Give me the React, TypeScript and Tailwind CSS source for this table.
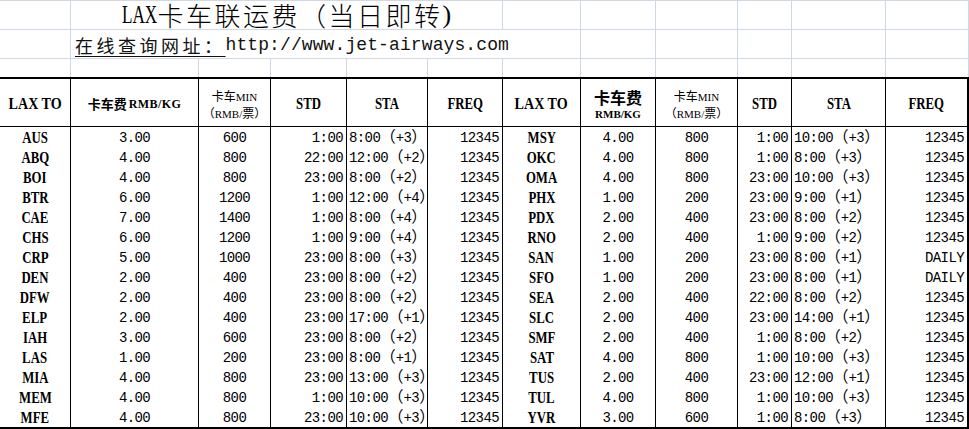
import React from 'react';

type Row = [string, string, string, string, string, string];

const leftRows: Row[] = [
  ['AUS', '3.00', '600', '1:00', '8:00（+3）', '12345'],
  ['ABQ', '4.00', '800', '22:00', '12:00（+2）', '12345'],
  ['BOI', '4.00', '800', '23:00', '8:00（+2）', '12345'],
  ['BTR', '6.00', '1200', '1:00', '12:00（+4）', '12345'],
  ['CAE', '7.00', '1400', '1:00', '8:00（+4）', '12345'],
  ['CHS', '6.00', '1200', '1:00', '9:00（+4）', '12345'],
  ['CRP', '5.00', '1000', '23:00', '8:00（+3）', '12345'],
  ['DEN', '2.00', '400', '23:00', '8:00（+2）', '12345'],
  ['DFW', '2.00', '400', '23:00', '8:00（+2）', '12345'],
  ['ELP', '2.00', '400', '23:00', '17:00（+1）', '12345'],
  ['IAH', '3.00', '600', '23:00', '8:00（+2）', '12345'],
  ['LAS', '1.00', '200', '23:00', '8:00（+1）', '12345'],
  ['MIA', '4.00', '800', '23:00', '13:00（+3）', '12345'],
  ['MEM', '4.00', '800', '1:00', '10:00（+3）', '12345'],
  ['MFE', '4.00', '800', '23:00', '10:00（+3）', '12345'],
];

const rightRows: Row[] = [
  ['MSY', '4.00', '800', '1:00', '10:00（+3）', '12345'],
  ['OKC', '4.00', '800', '1:00', '8:00（+3）', '12345'],
  ['OMA', '4.00', '800', '23:00', '10:00（+3）', '12345'],
  ['PHX', '1.00', '200', '23:00', '9:00（+1）', '12345'],
  ['PDX', '2.00', '400', '23:00', '8:00（+2）', '12345'],
  ['RNO', '2.00', '400', '1:00', '9:00（+2）', '12345'],
  ['SAN', '1.00', '200', '23:00', '8:00（+1）', 'DAILY'],
  ['SFO', '1.00', '200', '23:00', '8:00（+1）', 'DAILY'],
  ['SEA', '2.00', '400', '22:00', '8:00（+2）', '12345'],
  ['SLC', '2.00', '400', '23:00', '14:00（+1）', '12345'],
  ['SMF', '2.00', '400', '1:00', '8:00（+2）', '12345'],
  ['SAT', '4.00', '800', '1:00', '10:00（+3）', '12345'],
  ['TUS', '2.00', '400', '23:00', '12:00（+1）', '12345'],
  ['TUL', '4.00', '800', '1:00', '10:00（+3）', '12345'],
  ['YVR', '3.00', '600', '1:00', '8:00（+3）', '12345'],
];

const cols =
  'grid grid-cols-[71px_128px_72px_76px_81px_75px_78px_75px_82px_54px_94px_83px]';
const mono = "font-['Liberation_Mono','Noto_Sans_CJK_SC',monospace]";
const serif = "font-['Liberation_Serif','Noto_Sans_CJK_SC',serif]";
const cjk = "font-['Noto_Sans_CJK_SC',sans-serif]";

const gridLine = 'border-r border-[#d0d7e5]';

const BoldLatin = ({ text, wide }: { text: string; wide?: boolean }) => (
  <span
    className={`${serif} inline-block text-[16px] font-bold leading-none ${wide ? 'scale-x-[0.88]' : 'scale-x-[0.8]'}`}
  >
    {text}
  </span>
);

// "8:00（+3）" -> time, then full-width brackets a bit wider than the digits
const Arrival = ({ value }: { value: string }) => {
  const [time, rest] = value.split('（');
  const days = rest.replace('）', '');
  return (
    <>
      {time}
      <span className={`${cjk} text-[15.5px] leading-[0px] tracking-normal`}>（</span>
      {days}
      <span className={`${cjk} text-[15.5px] leading-[0px] tracking-normal`}>）</span>
    </>
  );
};

const MinHeader = ({ last }: { last?: boolean }) => (
  <div
    className={`flex h-[48px] flex-col items-center justify-center border-b border-black ${last ? 'border-r-2' : 'border-r'} pt-[4px] text-[12px] leading-[16px] text-black`}
  >
    <span className="whitespace-nowrap">
      <span className={cjk}>卡车</span>
      <span className={`${serif} text-[11px]`}>MIN</span>
    </span>
    <span className="whitespace-nowrap">
      <span className={cjk}>（</span>
      <span className={`${serif} text-[11px]`}>RMB/</span>
      <span className={cjk}>票）</span>
    </span>
  </div>
);

const HeadCell = ({ children, last }: { children: React.ReactNode; last?: boolean }) => (
  <div
    className={`flex h-[48px] items-center justify-center border-b border-black ${last ? 'border-r-2' : 'border-r'} pt-[2px] text-black`}
  >
    {children}
  </div>
);

function DataCells({ row, right }: { row: Row; right?: boolean }) {
  const [code, rate, min, std, sta, freq] = row;
  const cell = `h-[20px] border-r border-black ${mono} text-[14px] leading-[18px] tracking-[-0.6px] text-black whitespace-nowrap pt-[2px]`;
  return (
    <>
      <div className="flex h-[20px] items-center justify-center border-r border-black pt-[1px] text-black">
        <BoldLatin text={code} />
      </div>
      <div className={`${cell} text-center`}>{rate}</div>
      <div className={`${cell} text-center`}>{min}</div>
      <div className={`${cell} pr-[3px] text-right`}>{std}</div>
      <div className={`${cell} overflow-hidden pl-[2px] text-left`}>
        <Arrival value={sta} />
      </div>
      <div className={`${cell} pr-[3px] text-right ${right ? 'border-r-2' : ''}`}>{freq}</div>
    </>
  );
}

export default function App() {
  const emptySix = [0, 1, 2, 3, 4, 5];
  return (
    <div className="h-[429px] w-[969px] overflow-hidden bg-white">
      {/* sheet rows above the table */}
      <div className={`${cols} border-t border-[#d0d7e5]`}>
        <div className={`h-[29px] border-b ${gridLine}`} />
        <div
          className={`col-span-5 flex h-[29px] items-center justify-center whitespace-nowrap border-b ${gridLine} text-[26px] leading-[28px] text-black`}
        >
          <span className={`${serif} mr-[-18px] inline-block origin-left scale-x-[0.66]`}>LAX</span>
          <span className={`${cjk} font-light tracking-[2.5px]`}>卡车联运费（当日即转</span>
          <span className={serif}>)</span>
        </div>
        {emptySix.map((i) => (
          <div key={`r1-${i}`} className={`h-[29px] border-b ${gridLine}`} />
        ))}

        <div className={`h-[29px] border-b ${gridLine}`} />
        <div
          className={`col-span-6 flex h-[29px] items-end whitespace-nowrap border-b ${gridLine} pb-[2px] pl-[4px] text-[18px] leading-[22px] text-[#111]`}
        >
          <span className={`${cjk} tracking-[3.5px] underline decoration-1 underline-offset-[3px]`}>
            在线查询网址：
          </span>
          <span className={`${mono} tracking-[0.1px]`}>http://www.jet-airways.com</span>
        </div>
        {[0, 1, 2, 3, 4].map((i) => (
          <div key={`r2-${i}`} className={`h-[29px] border-b ${gridLine}`} />
        ))}

        {[...emptySix, 6, 7, 8, 9, 10, 11].map((i) => (
          <div key={`r3-${i}`} className={`h-[18px] ${gridLine}`} />
        ))}
      </div>

      {/* rate table */}
      <div className={`${cols} border-t-2 border-b-2 border-black`}>
        <HeadCell>
          <BoldLatin text="LAX TO" wide />
        </HeadCell>
        <HeadCell>
          <span className={`${cjk} text-[13px] font-bold`}>卡车费</span>
          <span className={`${serif} ml-[2px] text-[12px] font-bold tracking-[0.4px]`}>RMB/KG</span>
        </HeadCell>
        <MinHeader />
        <HeadCell>
          <BoldLatin text="STD" />
        </HeadCell>
        <HeadCell>
          <BoldLatin text="STA" />
        </HeadCell>
        <HeadCell>
          <BoldLatin text="FREQ" />
        </HeadCell>

        <HeadCell>
          <BoldLatin text="LAX TO" wide />
        </HeadCell>
        <div className="flex h-[48px] flex-col items-center justify-center border-b border-r border-black pt-[3px] text-black">
          <span className={`${cjk} text-[16px] font-bold leading-[19px]`}>卡车费</span>
          <span className={`${serif} text-[11px] font-bold leading-[14px]`}>RMB/KG</span>
        </div>
        <MinHeader />
        <HeadCell>
          <BoldLatin text="STD" />
        </HeadCell>
        <HeadCell>
          <BoldLatin text="STA" />
        </HeadCell>
        <HeadCell last>
          <BoldLatin text="FREQ" />
        </HeadCell>

        {leftRows.map((row, i) => (
          <React.Fragment key={row[0]}>
            <DataCells row={row} />
            <DataCells row={rightRows[i]} right />
          </React.Fragment>
        ))}
      </div>
    </div>
  );
}
